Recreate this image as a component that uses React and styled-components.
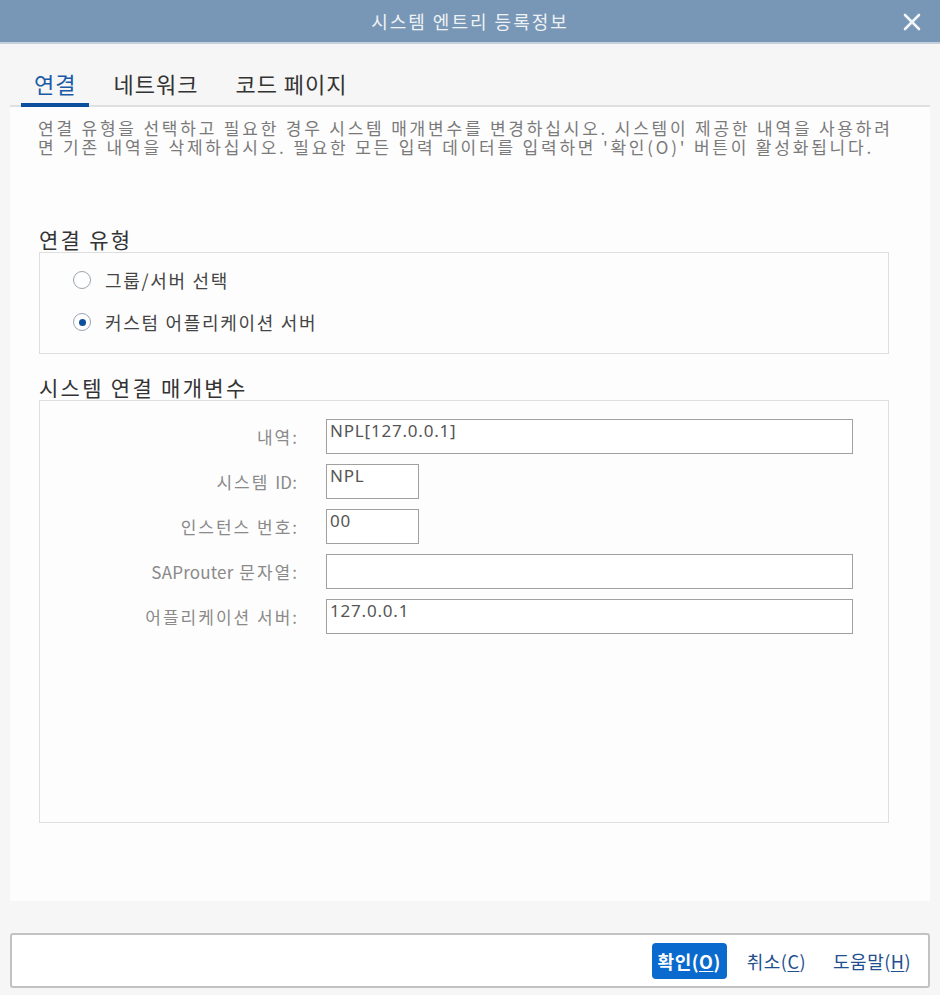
import React, { useState } from 'react'
import styled, { createGlobalStyle } from 'styled-components'

const Global = createGlobalStyle`
  html, body {
    margin: 0;
    padding: 0;
    background: #f6f6f6;
    font-family: "Noto Sans CJK KR", "Noto Sans", sans-serif;
  }
`

const Window = styled.div`
  width: 940px;
  height: 995px;
  display: flex;
  flex-direction: column;
  background: #f6f6f6;
`

const TitleBar = styled.div`
  height: 42px;
  flex: none;
  background: #7896b5;
  border-bottom: 2px solid #c4d0dc;
  display: flex;
  align-items: center;
  justify-content: center;
  position: relative;
  color: #eef2f6;
  font-size: 18px;
  letter-spacing: 2px;
`

const CloseBtn = styled.button`
  position: absolute;
  right: 18px;
  top: 12px;
  width: 20px;
  height: 20px;
  padding: 0;
  border: 0;
  background: transparent;
  cursor: pointer;
`

const TabBar = styled.div`
  height: 61px;
  flex: none;
  display: flex;
  align-items: flex-end;
  gap: 11px;
  margin: 0 10px;
  padding-left: 11px;
  border-bottom: 2px solid #e0e0e0;
`

const Tab = styled.div`
  padding: 0 13px 6px;
  font-size: 22px;
  line-height: 28px;
  letter-spacing: 1px;
  color: ${p => (p.active ? '#1a5aa8' : '#333')};
  border-bottom: 4px solid ${p => (p.active ? '#0b4f9e' : 'transparent')};
  margin-bottom: -2px;
  cursor: pointer;
`

const Panel = styled.div`
  margin: 0 10px;
  height: 794px;
  flex: none;
  background: #fdfdfd;
  padding: 11px 0 0 28px;
  box-sizing: border-box;
`

const Intro = styled.p`
  margin: 0;
  font-size: 17px;
  line-height: 19px;
  color: #7a7a7a;
  letter-spacing: 2.8px;
  white-space: nowrap;
`

const Heading = styled.h3`
  margin: ${p => p.top}px 0 0 1px;
  font-size: 21px;
  font-weight: 400;
  line-height: 26px;
  letter-spacing: 2.3px;
  color: #333;
`

const GroupBox = styled.div`
  margin-left: 1px;
  width: 850px;
  height: ${p => p.h}px;
  box-sizing: border-box;
  border: 1px solid #dedede;
  background: #fdfdfd;
`

const RadioList = styled.div`
  display: flex;
  flex-direction: column;
  gap: 18px;
  padding: 15px 0 0 33px;
`

const RadioRow = styled.label`
  display: flex;
  align-items: center;
  gap: 14px;
  font-size: 18px;
  line-height: 24px;
  letter-spacing: 1.7px;
  color: #444;
  cursor: pointer;
`

const RadioCircle = styled.span`
  width: 18px;
  height: 18px;
  box-sizing: border-box;
  border-radius: 50%;
  border: 1.5px solid #9aa4ae;
  background: #fff;
  display: flex;
  align-items: center;
  justify-content: center;
  &::after {
    content: '';
    width: 7px;
    height: 7px;
    border-radius: 50%;
    background: ${p => (p.checked ? '#0b4f9e' : 'transparent')};
  }
`

const Form = styled.div`
  display: grid;
  grid-template-columns: 257px 1fr;
  column-gap: 29px;
  row-gap: 10px;
  padding-top: 18px;
  align-items: center;
`

const Label = styled.div`
  text-align: right;
  font-size: 17px;
  color: #8a8a8a;
  line-height: 22px;
  letter-spacing: 2px;
  margin-right: -2px;
`

const Latin = styled.span`
  letter-spacing: 0.2px;
`

const Field = styled.div`
  width: ${p => (p.short ? 93 : 527)}px;
  height: 35px;
  box-sizing: border-box;
  border: 1px solid #a0a0a0;
  background: #fff;
  padding: 1px 3px;
  font-size: 17px;
  line-height: 20px;
  letter-spacing: 0.8px;
  color: #555;
  font-family: "Noto Sans", "Noto Sans CJK KR", sans-serif;
`

const Footer = styled.div`
  margin: 32px 10px 0;
  height: 55px;
  box-sizing: border-box;
  border: 2px solid #c2c2c2;
  border-radius: 3px;
  background: #fff;
  display: flex;
  align-items: center;
  justify-content: flex-end;
  padding-right: 17px;
  gap: 20px;
`

const Button = styled.button`
  height: 36px;
  padding: 0 ${p => (p.primary ? 6 : 0)}px;
  border: 0;
  border-radius: 4px;
  background: ${p => (p.primary ? '#0a6acd' : 'transparent')};
  color: ${p => (p.primary ? '#fff' : '#1f4f8f')};
  font-family: "Noto Sans CJK KR", sans-serif;
  font-size: 18px;
  letter-spacing: 0.5px;
  font-weight: ${p => (p.primary ? 700 : 400)};
  cursor: pointer;
  margin-left: ${p => p.ml || 0}px;
  & u {
    text-underline-offset: 2px;
  }
`

const fields = [
  { label: '내역:', value: 'NPL[127.0.0.1]' },
  { label: <>시스템 <Latin>ID</Latin>:</>, value: 'NPL', short: true },
  { label: '인스턴스 번호:', value: '00', short: true },
  { label: <><Latin>SAProuter</Latin> 문자열:</>, value: '' },
  { label: '어플리케이션 서버:', value: '127.0.0.1' },
]

export default function App() {
  const [tab, setTab] = useState(0)
  const [mode, setMode] = useState(1)

  return (
    <Window>
      <Global />
      <TitleBar>
        시스템 엔트리 등록정보
        <CloseBtn aria-label="close">
          <svg width="20" height="20" viewBox="0 0 20 20">
            <path d="M3 3 L17 17 M17 3 L3 17" stroke="#f2f6fa" strokeWidth="2.6" strokeLinecap="round" />
          </svg>
        </CloseBtn>
      </TitleBar>

      <TabBar>
        {['연결', '네트워크', '코드 페이지'].map((t, i) => (
          <Tab key={t} active={tab === i} onClick={() => setTab(i)}>{t}</Tab>
        ))}
      </TabBar>

      <Panel>
        <Intro>
          연결 유형을 선택하고 필요한 경우 시스템 매개변수를 변경하십시오. 시스템이 제공한 내역을 사용하려
          <br />
          면 기존 내역을 삭제하십시오. 필요한 모든 입력 데이터를 입력하면 '확인(O)' 버튼이 활성화됩니다.
        </Intro>

        <Heading top={70}>연결 유형</Heading>
        <GroupBox h={102}>
          <RadioList>
            <RadioRow onClick={() => setMode(0)}>
              <RadioCircle checked={mode === 0} />
              그룹/서버 선택
            </RadioRow>
            <RadioRow onClick={() => setMode(1)}>
              <RadioCircle checked={mode === 1} />
              커스텀 어플리케이션 서버
            </RadioRow>
          </RadioList>
        </GroupBox>

        <Heading top={20}>시스템 연결 매개변수</Heading>
        <GroupBox h={423}>
          <Form>
            {fields.map((f, i) => (
              <React.Fragment key={i}>
                <Label>{f.label}</Label>
                <Field short={f.short}>{f.value}</Field>
              </React.Fragment>
            ))}
          </Form>
        </GroupBox>
      </Panel>

      <Footer>
        <Button primary>확인(<u>O</u>)</Button>
        <Button>취소(<u>C</u>)</Button>
        <Button ml={7}>도움말(<u>H</u>)</Button>
      </Footer>
    </Window>
  )
}
